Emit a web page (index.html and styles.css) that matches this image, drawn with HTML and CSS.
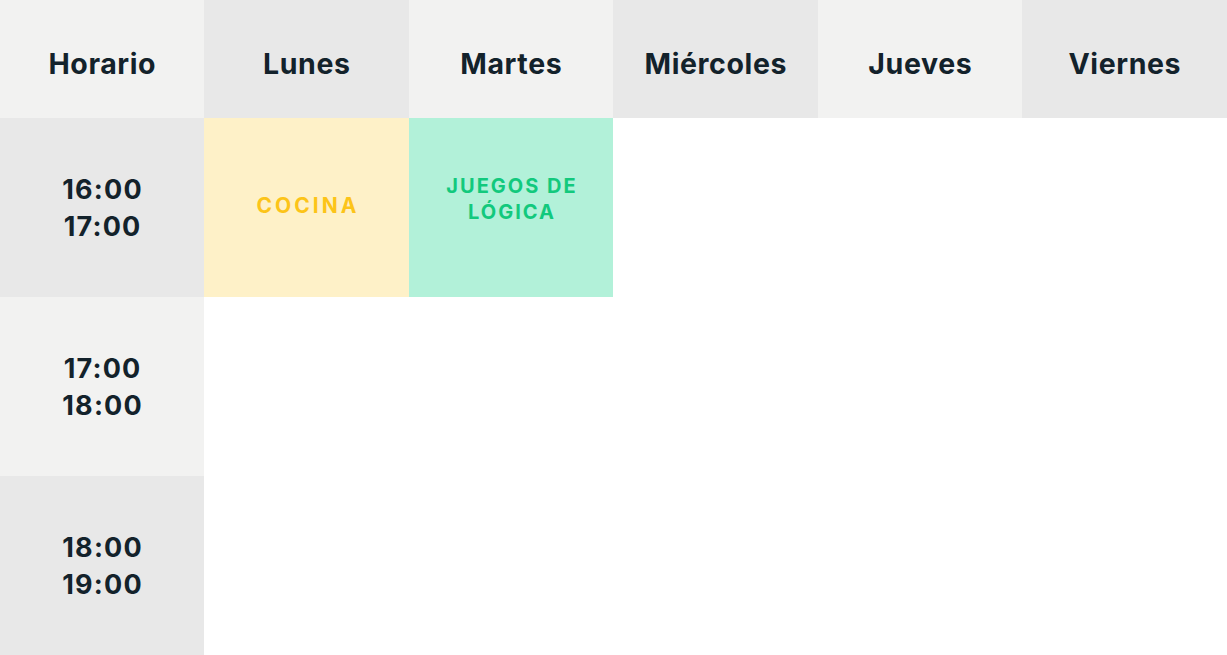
FILE: index.html
```html
<!DOCTYPE html>
<html lang="es">
<head>
<meta charset="utf-8">
<title>Horario</title>
<link rel="stylesheet" href="styles.css">
</head>
<body>
<div class="schedule">
  <div class="cell head light">Horario</div>
  <div class="cell head dark">Lunes</div>
  <div class="cell head light">Martes</div>
  <div class="cell head dark">Miércoles</div>
  <div class="cell head light">Jueves</div>
  <div class="cell head dark">Viernes</div>

  <div class="cell time dark"><span>16:00</span><span>17:00</span></div>
  <div class="cell act cocina">COCINA</div>
  <div class="cell act logica">JUEGOS DE<br>LÓGICA</div>
  <div class="cell"></div>
  <div class="cell"></div>
  <div class="cell"></div>

  <div class="cell time light"><span>17:00</span><span>18:00</span></div>
  <div class="cell"></div>
  <div class="cell"></div>
  <div class="cell"></div>
  <div class="cell"></div>
  <div class="cell"></div>

  <div class="cell time dark"><span>18:00</span><span>19:00</span></div>
  <div class="cell"></div>
  <div class="cell"></div>
  <div class="cell"></div>
  <div class="cell"></div>
  <div class="cell"></div>
</div>
</body>
</html>
```
FILE: styles.css
```css
html, body {
  margin: 0;
  padding: 0;
  background: #ffffff;
}
body {
  font-family: "Inter", "Lato", sans-serif;
  color: #13222b;
}
.schedule {
  display: grid;
  grid-template-columns: 204px 205px 204px 205px 204px 205px;
  grid-template-rows: 118px 179px 179px 179px;
  width: 1227px;
  height: 655px;
}
.cell {
  display: flex;
  align-items: center;
  justify-content: center;
  text-align: center;
  box-sizing: border-box;
}
.light { background: #f2f2f1; }
.dark { background: #e8e8e8; }
.head {
  font-size: 28.5px;
  font-weight: 700;
  letter-spacing: 0.6px;
  padding-top: 8px;
  padding-left: 0.6px;
}
.time {
  flex-direction: column;
  font-size: 27px;
  font-weight: 700;
  line-height: 37px;
  letter-spacing: 1.2px;
  padding-left: 1.2px;
}
.act {
  font-weight: 700;
}
.cocina {
  background: #fef1c8;
  color: #fcc419;
  font-size: 21px;
  letter-spacing: 3px;
  padding-left: 3px;
  padding-bottom: 4px;
}
.logica {
  background: #b2f1d9;
  color: #12c97d;
  font-size: 20px;
  line-height: 26px;
  letter-spacing: 2px;
  padding-left: 2px;
  padding-bottom: 18px;
}
```
